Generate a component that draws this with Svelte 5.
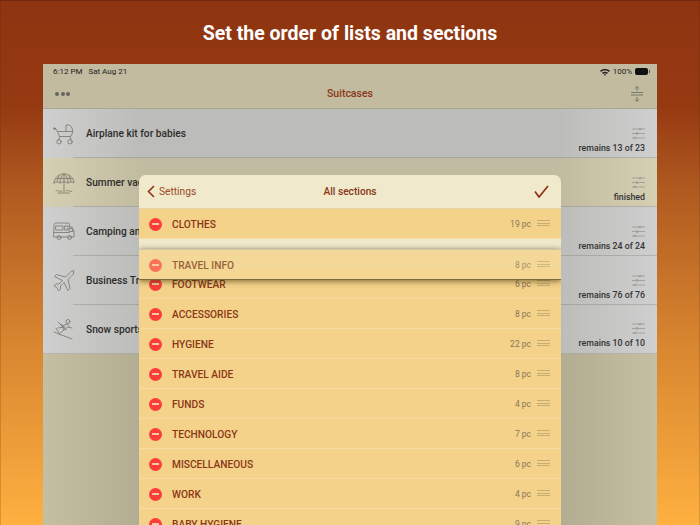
<script>
  const lists = [
    { name: "Airplane kit for babies", note: "remains 13 of 23", icon: "pram" },
    { name: "Summer vacation", note: "finished", icon: "beach", on: true },
    { name: "Camping and hiking", note: "remains 24 of 24", icon: "van" },
    { name: "Business Trip", note: "remains 76 of 76", icon: "plane" },
    { name: "Snow sports", note: "remains 10 of 10", icon: "ski" }
  ];
  const sections = [
    ["FOOTWEAR", 6], ["ACCESSORIES", 8], ["HYGIENE", 22], ["TRAVEL AIDE", 8],
    ["FUNDS", 4], ["TECHNOLOGY", 7], ["MISCELLANEOUS", 6], ["WORK", 4], ["BABY HYGIENE", 9]
  ];
</script>

{#snippet sectionRow(name, count)}
  <span class="minus"><i></i></span>
  <span class="sec-name">{name}</span>
  <span class="count">{count} pc</span>
  <span class="grip"><i></i><i></i><i></i></span>
{/snippet}

<div class="page">
  <h1>Set the order of lists and sections</h1>

  <div class="tablet">
    <div class="status">
      <span>6:12 PM&nbsp;&nbsp; Sat Aug 21</span>
      <span class="status-right">
        <svg width="10" height="8" viewBox="0 0 11 8"><path d="M0 2.600C3 0 8 0 11 2.600L9.800 3.900C7.500 2 3.500 2 1.200 3.900zM2.200 4.900C4 3.400 7 3.400 8.800 4.900L7.600 6.100C6.500 5.200 4.500 5.200 3.400 6.100zM4.300 6.900C5 6.400 6 6.400 6.700 6.900L5.500 8z" fill="#222"/></svg>
        100%
        <span class="battery"></span>
      </span>
    </div>
    <div class="nav">
      <span class="dots"><i></i><i></i><i></i></span>
      <span class="nav-title">Suitcases</span>
      <svg class="sort" width="12" height="16" viewBox="0 0 12 16" fill="none" stroke="#77776b" stroke-width="1"><path d="M0 6.500H12M0 9H12M6 0.500V5M6 11V15.500M4 2.500L6 .5L8 2.500M4 13.500L6 15.500L8 13.500"/></svg>
    </div>

    <div class="lists">
      {#each lists as l, i}
        <div class="list-row" class:on={l.on} class:inset={i < lists.length - 1}>
          <span class="icon">
            <svg width="22" height="22" viewBox="0 0 22 22" fill="none" stroke="#77776f" stroke-width="0.8" stroke-linecap="round" stroke-linejoin="round">
              {#if l.icon === "pram"}
                <path d="M1 5.500L3.500 6.500L6.500 13.500H17.500C19.500 11.500 20 8.500 19 5C18 2.500 15.500 1.500 13 2V8.500H5"/>
                <path d="M13 8.500H20M7 13.500L5.500 17M17 13.500L18 17"/>
                <circle cx="6" cy="18.800" r="2.200"/><circle cx="17" cy="18.800" r="2.200"/>
                <circle cx="1.500" cy="5.500" r=".8"/>
              {:else if l.icon === "beach"}
                <path d="M1 11C1.500 5 6 2 11 2C16 2 20.500 5 21 11C19 9.500 17 9.500 15 11C13.500 9.500 8.500 9.500 7 11C5 9.500 3 9.500 1 11Z"/>
                <path d="M7 11C7 6 9 3 11 2C13 3 15 6 15 11M11 2V20M3.500 6.500L18.500 6.500M6 3.500L4 9.500M16 3.500L18 9.500"/>
                <path d="M3 19C5 17.500 7 20.500 9 19M13 19C15 17.500 17 20.500 19 19M5 21H17" stroke-dasharray="1.200 .8"/>
              {:else if l.icon === "van"}
                <path d="M1 3.500C1 2.500 2 2 3 2H15C16 2 16.500 2.500 16.500 3.500V6H19C20 8 21 9.500 21 11V16H1Z"/>
                <path d="M3 5H10V9H3ZM12 5H15V9H12ZM16.500 7.500H19L20 10.500H16.500ZM1 11.500H16.500"/>
                <circle cx="6" cy="16.500" r="2"/><circle cx="16.500" cy="16.500" r="2"/>
              {:else if l.icon === "plane"}
                <path d="M20.500 1C21.500 2 20.500 4 19 5.500L15 9.500L17 18.500L15 20.500L11 12.500L7.500 16V19L5.500 21L4 17.500L1 16L3 14L6 14L9.500 10.500L1.500 6.500L3.500 4.500L12.500 7L16.500 3C18 1.500 19.500 .5 20.500 1Z"/>
              {:else}
                <circle cx="15" cy="3.500" r="2"/>
                <path d="M14 6L9 8L5 4M9 8L11 12L7 15M11 12L15 9L19 10M14 6L16 8M5 10L12 9M8 6L13 12"/>
                <path d="M1 14L19 21M3 10L7 17"/>
              {/if}
            </svg>
          </span>
          <span class="list-name">{l.name}</span>
          <span class="list-end">
            <svg width="13" height="11" viewBox="0 0 13 11" fill="none" stroke="#a5a59c" stroke-width="1"><path d="M0 1H13M0 5.500H13M0 10H13"/><circle cx="8" cy="1" r="1" fill="#a5a59c"/><circle cx="5" cy="5.500" r="1" fill="#a5a59c"/><circle cx="3" cy="10" r="1" fill="#a5a59c"/></svg>
            <span class="note">{l.note}</span>
          </span>
        </div>
      {/each}
    </div>

    <div class="sheet">
      <div class="sheet-head">
        <span class="back">
          <svg width="8" height="13" viewBox="0 0 8 13" fill="none" stroke="#8f3413" stroke-width="1.600"><path d="M7 1L1.500 6.500L7 12"/></svg>
          Settings
        </span>
        <span class="sheet-title">All sections</span>
        <svg class="check" width="15" height="13" viewBox="0 0 15 13" fill="none" stroke="#8f3413" stroke-width="1.700"><path d="M1 6.500L5 12L14 1"/></svg>
      </div>
      <div class="sec-row">{@render sectionRow("CLOTHES", 19)}</div>
      <div class="gap"></div>
      {#each sections as s}
        <div class="sec-row">{@render sectionRow(s[0], s[1])}</div>
      {/each}
      <div class="sec-row dragged">{@render sectionRow("TRAVEL INFO", 8)}</div>
    </div>
  </div>
</div>

<style>
  :global(body) {
    margin: 0;
    font-family: "Roboto", "Liberation Sans", sans-serif;
  }
  .page {
    width: 700px;
    height: 525px;
    overflow: hidden;
    display: flex;
    flex-direction: column;
    align-items: center;
    box-sizing: border-box;
    border-top: 1px solid #6f2a10;
    background: linear-gradient(180deg, #8e3410 0%, #963a12 20%, #b05a20 36%, #d88530 65%, #feb040 100%);
    box-shadow: inset 1px 0 rgba(90, 40, 0, .2), inset -1px 0 rgba(90, 40, 0, .2);
  }
  h1 {
    margin: 0;
    height: 63px;
    line-height: 65px;
    font-size: 19.500px;
    font-weight: 700;
    color: #fff;
  }
  .tablet {
    position: relative;
    width: 614px;
    flex: 1;
    display: flex;
    flex-direction: column;
    background: #c2bb9f;
  }
  .status {
    height: 15px;
    padding: 0 9px 0 10px;
    display: flex;
    justify-content: space-between;
    align-items: center;
    font-size: 8px;
    color: #222;
  }
  .status-right { display: flex; align-items: center; gap: 3px; }
  .battery {
    width: 13px;
    height: 7px;
    border-radius: 2px;
    background: #111;
    display: inline-block;
    position: relative;
  }
  .battery::after {
    content: "";
    position: absolute;
    left: 14px;
    top: 2px;
    width: 1px;
    height: 3px;
    background: #555;
  }
  .nav {
    height: 29px;
    display: flex;
    align-items: center;
    justify-content: space-between;
    padding: 0 14px 0 12px;
    border-bottom: 1px solid #aca68e;
    position: relative;
  }
  .dots { display: flex; gap: 1.500px; }
  .dots i { width: 4px; height: 4px; border-radius: 50%; background: #66665f; }
  .nav-title {
    position: absolute;
    left: 0;
    right: 0;
    text-align: center;
    font-size: 10.500px;
    font-weight: 500;
    color: #8a3716;
  }
  .lists {
    flex: 1;
    position: relative;
    background: #c4bea2;
  }
  /* dim layer: gets darker toward the sheet */
  .lists::after {
    content: "";
    position: absolute;
    inset: 0;
    background: linear-gradient(90deg, rgba(60, 60, 40, 0) 0%, rgba(60, 60, 40, .13) 16%, rgba(60, 60, 40, .13) 84%, rgba(60, 60, 40, 0) 100%);
  }
  .list-row {
    height: 49px;
    box-sizing: border-box;
    display: flex;
    align-items: center;
    background: #cfcfcf;
    position: relative;
  }
  .list-row.on { background: #d5cfb3; }
  .list-row.inset::after {
    content: "";
    position: absolute;
    left: 30px;
    right: 0;
    bottom: 0;
    height: 1px;
    background: #b3b3ae;
  }
  .list-row:last-child { border-bottom: 1px solid #b8b8b2; }
  .icon { width: 22px; height: 22px; margin: 0 11px 0 10px; }
  .icon svg { display: block; }
  .list-name { font-size: 10.200px; font-weight: 500; color: #2b2b2b; }
  .list-end {
    margin-left: auto;
    padding: 14px 12px 0 0;
    display: flex;
    flex-direction: column;
    align-items: flex-end;
    gap: 4px;
  }
  .note { font-size: 8.800px; font-weight: 500; color: #333; line-height: 11px; }
  .sheet {
    position: absolute;
    left: 96px;
    top: 111px;
    width: 422px;
    height: 350px;
    overflow: hidden;
    border-radius: 7px 7px 0 0;
    background: #f4d28a;
  }
  .sheet-head {
    height: 33px;
    display: flex;
    align-items: center;
    justify-content: space-between;
    padding: 0 12px 0 8px;
    position: relative;
    background: #f0e9cc;
    border-bottom: 1px solid #e3d5a8;
  }
  .back { display: flex; align-items: center; gap: 4px; font-size: 10.200px; color: #9a4a25; }
  .sheet-title {
    position: absolute;
    left: 0;
    right: 0;
    text-align: center;
    font-size: 10.200px;
    font-weight: 500;
    color: #8a3716;
  }
  .sec-row {
    height: 30px;
    box-sizing: border-box;
    display: flex;
    align-items: center;
    padding: 1px 11px 0 10px;
    position: relative;
    background: #f4d28a;
    border-bottom: 1px solid #f6dca0;
  }
  .gap { height: 30px; background: #f0e9cc; }
  .dragged {
    position: absolute;
    left: 0;
    right: 0;
    top: 74px;
    height: 31px;
    background: rgba(244, 214, 146, .93);
    border-top: 1px solid #cfc8a8;
    border-bottom: 1px solid #7d6b3e;
    box-shadow: 0 1px 6px rgba(70, 50, 10, .7);
  }
  .dragged > * { opacity: .75; }
  .dragged .sec-name { color: #7a3a1a; }
  .dragged .minus { background: #fd5145; }
  .minus {
    width: 13px;
    height: 13px;
    border-radius: 50%;
    background: #fc3d39;
    display: flex;
    align-items: center;
    justify-content: center;
    margin-right: 10px;
  }
  .minus i { width: 7px; height: 1.500px; background: #f7c9a0; }
  .sec-name { font-size: 10.200px; font-weight: 500; color: #8a3716; }
  .count { margin-left: auto; margin-right: 6px; font-size: 8.500px; color: #86785a; }
  .grip { display: flex; flex-direction: column; gap: 1.500px; width: 13px; margin-bottom: 2px; }
  .grip i { height: 1px; background: #c6ad72; }
</style>
